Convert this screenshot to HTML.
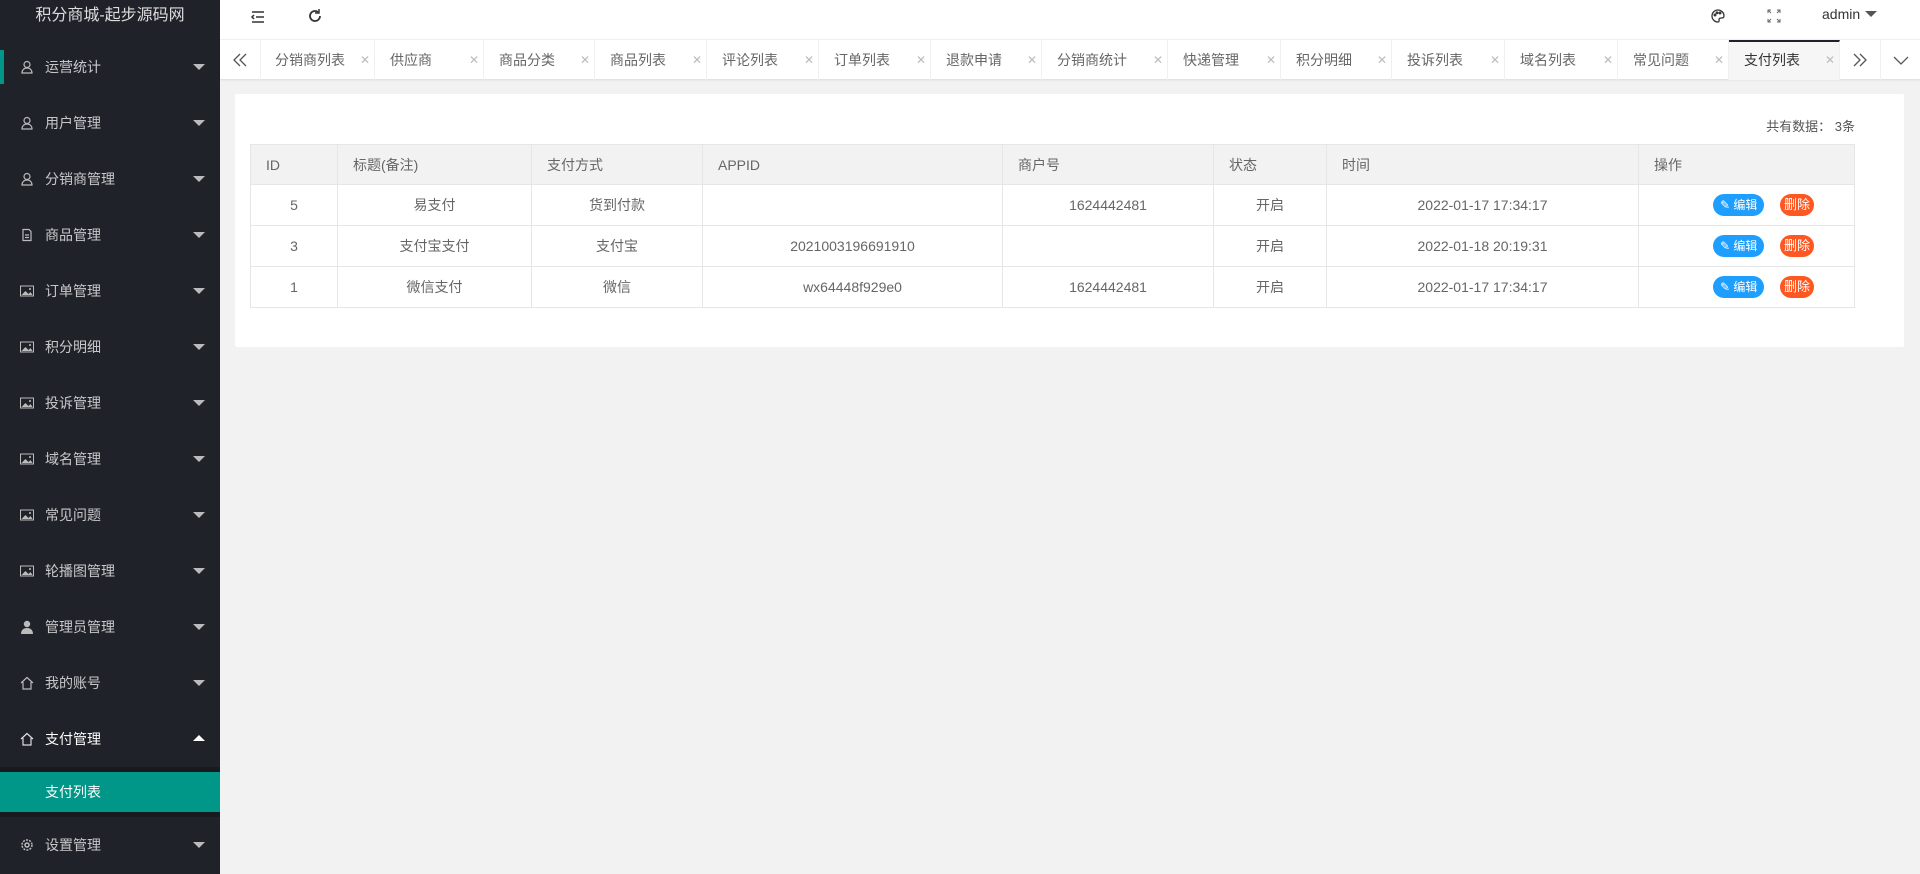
<!DOCTYPE html>
<html><head><meta charset="utf-8">
<style>
*{margin:0;padding:0;box-sizing:border-box}
body{width:1920px;height:874px;overflow:hidden;background:#f2f2f2;font-family:"Liberation Sans","Noto Sans CJK SC",sans-serif;font-size:14px;color:#666;position:relative}
.side{position:absolute;left:0;top:0;width:220px;height:874px;background:#20222a}
.logo{height:39px;line-height:32px;text-align:center;color:#ddd;font-size:16px}
.it{position:absolute;left:0;width:220px;height:56px;line-height:56px;color:rgba(255,255,255,.75);padding-left:45px;font-size:14px}
.it .ic{position:absolute;left:20px;top:21px;width:14px;height:14px}
.it .ar{position:absolute;left:193px;top:25px;width:0;height:0;border-left:6px solid transparent;border-right:6px solid transparent;border-top:6px solid #bbb}
.it .up{border-top:none;border-bottom:6px solid #fff;top:24px}
.hdr{position:absolute;left:220px;top:0;right:0;height:39px;background:#fff}
.tabs{position:absolute;left:220px;top:39px;right:0;height:40px;background:#fff;border-top:1px solid #f0f0f0;box-shadow:0 1px 2px rgba(0,0,0,.1)}
.tab{position:absolute;top:0;height:40px;line-height:40px;border-right:1px solid #f0f0f0;padding-left:15px;color:#666;font-size:14px}
.tab .x{position:absolute;right:4px;top:0;color:#bbb;font-size:12px}
.tab.on{background:#f6f6f6;color:#333;border-top:2px solid #20222a;line-height:37px}
.card{position:absolute;left:235px;top:94px;width:1669px;height:253px;background:#fff;border-radius:2px}
table{position:absolute;left:15px;top:50px;border-collapse:collapse;width:1605px}
td,th{border:1px solid #e6e6e6;height:41px;font-weight:normal;font-size:14px;color:#666;text-align:center}
th{background:#f2f2f2;text-align:left;padding-left:15px;height:40px}
td.op{padding-left:34px}
.b{display:inline-block;height:22px;line-height:22px;border-radius:11px;color:#fff;font-size:12px;vertical-align:middle}
.e{background:#1e9fff;padding:0 7px}
.d{background:#ff5722;padding:0 4px;font-size:13px}
</style></head><body>
<div class="side">
<div class="logo">积分商城-起步源码网</div>
<div style="position:absolute;left:0;top:50px;width:4px;height:34px;background:#009688"></div>
<div class="it" style="top:39px">
<svg class="ic" viewBox="0 0 14 14" fill="none" stroke="#bbb" stroke-width="1.2"><circle cx="7" cy="4.5" r="3"/><path d="M2 13c0-3 2-5 5-5s5 2 5 5z"/></svg>运营统计<span class="ar"></span></div>
<div class="it" style="top:95px"><svg class="ic" viewBox="0 0 14 14" fill="none" stroke="#bbb" stroke-width="1.2"><circle cx="7" cy="4.5" r="3"/><path d="M2 13c0-3 2-5 5-5s5 2 5 5z"/></svg>用户管理<span class="ar"></span></div>
<div class="it" style="top:151px"><svg class="ic" viewBox="0 0 14 14" fill="none" stroke="#bbb" stroke-width="1.2"><circle cx="7" cy="4.5" r="3"/><path d="M2 13c0-3 2-5 5-5s5 2 5 5z"/></svg>分销商管理<span class="ar"></span></div>
<div class="it" style="top:207px"><svg class="ic" viewBox="0 0 14 14" fill="none" stroke="#bbb" stroke-width="1.2"><path d="M3 1.5h6l2 2v9H3z M5 7h4M5 9.5h4"/></svg>商品管理<span class="ar"></span></div>
<div class="it" style="top:263px"><svg class="ic" viewBox="0 0 14 14"><rect x="0.5" y="2" width="13" height="10" fill="none" stroke="#bbb"/><path d="M1.5 11l4-4 3 3 2-2 2 3z" fill="#bbb"/><circle cx="10" cy="5" r="1" fill="#bbb"/></svg>订单管理<span class="ar"></span></div>
<div class="it" style="top:319px"><svg class="ic" viewBox="0 0 14 14"><rect x="0.5" y="2" width="13" height="10" fill="none" stroke="#bbb"/><path d="M1.5 11l4-4 3 3 2-2 2 3z" fill="#bbb"/><circle cx="10" cy="5" r="1" fill="#bbb"/></svg>积分明细<span class="ar"></span></div>
<div class="it" style="top:375px"><svg class="ic" viewBox="0 0 14 14"><rect x="0.5" y="2" width="13" height="10" fill="none" stroke="#bbb"/><path d="M1.5 11l4-4 3 3 2-2 2 3z" fill="#bbb"/><circle cx="10" cy="5" r="1" fill="#bbb"/></svg>投诉管理<span class="ar"></span></div>
<div class="it" style="top:431px"><svg class="ic" viewBox="0 0 14 14"><rect x="0.5" y="2" width="13" height="10" fill="none" stroke="#bbb"/><path d="M1.5 11l4-4 3 3 2-2 2 3z" fill="#bbb"/><circle cx="10" cy="5" r="1" fill="#bbb"/></svg>域名管理<span class="ar"></span></div>
<div class="it" style="top:487px"><svg class="ic" viewBox="0 0 14 14"><rect x="0.5" y="2" width="13" height="10" fill="none" stroke="#bbb"/><path d="M1.5 11l4-4 3 3 2-2 2 3z" fill="#bbb"/><circle cx="10" cy="5" r="1" fill="#bbb"/></svg>常见问题<span class="ar"></span></div>
<div class="it" style="top:543px"><svg class="ic" viewBox="0 0 14 14"><rect x="0.5" y="2" width="13" height="10" fill="none" stroke="#bbb"/><path d="M1.5 11l4-4 3 3 2-2 2 3z" fill="#bbb"/><circle cx="10" cy="5" r="1" fill="#bbb"/></svg>轮播图管理<span class="ar"></span></div>
<div class="it" style="top:599px"><svg class="ic" viewBox="0 0 14 14" fill="#bbb"><circle cx="7" cy="4" r="3.2"/><path d="M1 14c0-4 2.5-6 6-6s6 2 6 6z"/></svg>管理员管理<span class="ar"></span></div>
<div class="it" style="top:655px"><svg class="ic" viewBox="0 0 14 14" fill="none" stroke="#bbb" stroke-width="1.2"><path d="M1 7l6-5.5 6 5.5M3 6v7h8V6"/></svg>我的账号<span class="ar"></span></div>
<div class="it" style="top:711px;color:#fff"><svg class="ic" viewBox="0 0 14 14" fill="none" stroke="#ddd" stroke-width="1.2"><path d="M1 7l6-5.5 6 5.5M3 6v7h8V6"/></svg>支付管理<span class="ar up"></span></div>
<div style="position:absolute;left:0;top:767px;width:220px;height:50px;background:#191a20"></div>
<div style="position:absolute;left:0;top:772px;width:220px;height:40px;background:#009688;color:#fff;line-height:40px;padding-left:45px">支付列表</div>
<div class="it" style="top:817px"><svg class="ic" viewBox="0 0 14 14" fill="none" stroke="#bbb" stroke-width="1.5"><circle cx="7" cy="7" r="2"/><circle cx="7" cy="7" r="5" stroke-dasharray="2 1.2"/></svg>设置管理<span class="ar"></span></div>
</div>
<div class="hdr">
<svg style="position:absolute;left:30px;top:9px" width="16" height="16" viewBox="0 0 16 16" fill="none" stroke="#333" stroke-width="1.5"><path d="M2 3h12M6 8h8M2 13h12M4 6l-2 2 2 2"/></svg>
<svg style="position:absolute;left:87px;top:8px" width="16" height="16" viewBox="0 0 16 16" fill="none" stroke="#333" stroke-width="1.8"><path d="M13 8a5 5 0 1 1-2-4"/><path d="M12 1v4H8" stroke-width="1.5"/></svg>
<svg style="position:absolute;left:1490px;top:8px" width="16" height="16" viewBox="0 0 16 16" fill="none" stroke="#333" stroke-width="1.3"><path d="M8 2a6 6 0 0 0 0 12c1.5 0 1-1.5 1-2.5s1-1.5 2.5-1.5S14 9.5 14 8A6 6 0 0 0 8 2z"/><circle cx="5" cy="7" r=".8"/><circle cx="7" cy="4.8" r=".8"/><circle cx="10" cy="5" r=".8"/></svg>
<svg style="position:absolute;left:1547px;top:9px" width="14" height="14" viewBox="0 0 14 14" fill="none" stroke="#666" stroke-width="1"><path d="M1 4V1h3M1 1l3 3M10 1h3v3M13 1l-3 3M1 10v3h3M1 13l3-3M13 10v3h-3M13 13l-3-3"/></svg>
<span style="position:absolute;left:1602px;top:6px;color:#333;font-size:14px">admin</span>
<span style="position:absolute;left:1645px;top:11px;border-left:6px solid transparent;border-right:6px solid transparent;border-top:6px solid #555"></span>
</div>
<div class="tabs">
<svg style="position:absolute;left:12px;top:13px" width="16" height="14" viewBox="0 0 16 14" fill="none" stroke="#555" stroke-width="1.3"><path d="M8 1L2 7l6 6M14 1L8 7l6 6"/></svg>
<div style="position:absolute;left:40px;top:0;height:40px;border-right:1px solid #f0f0f0"></div>
<div class="tab" style="left:40px;width:115px">分销商列表<span class="x">✕</span></div>
<div class="tab" style="left:155px;width:109px">供应商<span class="x">✕</span></div>
<div class="tab" style="left:264px;width:111px">商品分类<span class="x">✕</span></div>
<div class="tab" style="left:375px;width:112px">商品列表<span class="x">✕</span></div>
<div class="tab" style="left:487px;width:112px">评论列表<span class="x">✕</span></div>
<div class="tab" style="left:599px;width:112px">订单列表<span class="x">✕</span></div>
<div class="tab" style="left:711px;width:111px">退款申请<span class="x">✕</span></div>
<div class="tab" style="left:822px;width:126px">分销商统计<span class="x">✕</span></div>
<div class="tab" style="left:948px;width:113px">快递管理<span class="x">✕</span></div>
<div class="tab" style="left:1061px;width:111px">积分明细<span class="x">✕</span></div>
<div class="tab" style="left:1172px;width:113px">投诉列表<span class="x">✕</span></div>
<div class="tab" style="left:1285px;width:113px">域名列表<span class="x">✕</span></div>
<div class="tab" style="left:1398px;width:111px">常见问题<span class="x">✕</span></div>
<div class="tab on" style="left:1509px;width:111px">支付列表<span class="x">✕</span></div>
<svg style="position:absolute;left:1632px;top:13px" width="16" height="14" viewBox="0 0 16 14" fill="none" stroke="#555" stroke-width="1.3"><path d="M2 1l6 6-6 6M8 1l6 6-6 6"/></svg>
<div style="position:absolute;left:1660px;top:0;height:40px;border-left:1px solid #f0f0f0"></div>
<svg style="position:absolute;left:1673px;top:14px" width="16" height="12" viewBox="0 0 16 12" fill="none" stroke="#555" stroke-width="1.3"><path d="M1 3l7 7 7-7"/></svg>
</div>
<div class="card">
<div style="position:absolute;right:49px;top:22px;color:#555;font-size:13px">共有数据： 3条</div>
<table>
<tr><th style="width:87px">ID</th><th style="width:194px">标题(备注)</th><th style="width:171px">支付方式</th><th style="width:300px">APPID</th><th style="width:211px">商户号</th><th style="width:113px">状态</th><th style="width:312px">时间</th><th>操作</th></tr>
<tr><td>5</td><td>易支付</td><td>货到付款</td><td></td><td>1624442481</td><td>开启</td><td>2022-01-17 17:34:17</td><td class="op"><span class="b e">✎ 编辑</span>&nbsp;&nbsp;&nbsp;&nbsp;<span class="b d">删除</span></td></tr>
<tr><td>3</td><td>支付宝支付</td><td>支付宝</td><td>2021003196691910</td><td></td><td>开启</td><td>2022-01-18 20:19:31</td><td class="op"><span class="b e">✎ 编辑</span>&nbsp;&nbsp;&nbsp;&nbsp;<span class="b d">删除</span></td></tr>
<tr><td>1</td><td>微信支付</td><td>微信</td><td>wx64448f929e0</td><td>1624442481</td><td>开启</td><td>2022-01-17 17:34:17</td><td class="op"><span class="b e">✎ 编辑</span>&nbsp;&nbsp;&nbsp;&nbsp;<span class="b d">删除</span></td></tr>
</table>
</div>
</body></html>
